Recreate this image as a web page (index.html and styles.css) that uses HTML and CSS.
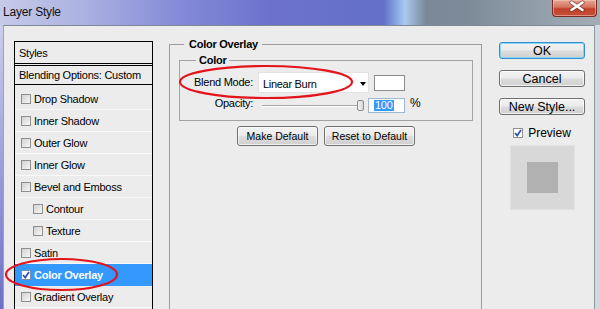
FILE: index.html
```html
<!DOCTYPE html>
<html lang="en">
<head>
    <meta charset="UTF-8">
    <meta name="viewport" content="width=device-width, initial-scale=1.0">
    <title>Layer Style</title>
    <link rel="stylesheet" href="styles.css">
</head>
<body>
<div class="window">
    <div class="titlebar">
        <span class="title">Layer Style</span>
        <span class="close">
            <svg width="45" height="17" viewBox="0 0 45 17">
                <path d="M18.5 3.5 L29.5 11 M29.5 3.5 L18.5 11" stroke="#5a2018" stroke-width="4.2" stroke-linecap="round" opacity="0.55"/>
                <path d="M18.5 3.5 L29.5 11 M29.5 3.5 L18.5 11" stroke="#fff" stroke-width="2.6" stroke-linecap="round"/>
            </svg>
        </span>
    </div>

    <div class="client">
        <ul class="style-list">
            <li class="list-head">Styles</li>
            <li class="list-blend">Blending Options: Custom</li>
            <li class="list-items">
                <div class="item"><span class="check"></span>Drop Shadow</div>
                <div class="item"><span class="check"></span>Inner Shadow</div>
                <div class="item"><span class="check"></span>Outer Glow</div>
                <div class="item"><span class="check"></span>Inner Glow</div>
                <div class="item"><span class="check"></span>Bevel and Emboss</div>
                <div class="item sub"><span class="check"></span>Contour</div>
                <div class="item sub"><span class="check"></span>Texture</div>
                <div class="item"><span class="check"></span>Satin</div>
                <div class="item selected"><span class="check on"></span>Color Overlay</div>
                <div class="item"><span class="check"></span>Gradient Overlay</div>
            </li>
        </ul>

        <fieldset class="group">
            <legend>Color Overlay</legend>
            <fieldset class="inner">
                <legend>Color</legend>
                <div class="field-row blend-row">
                    <label class="field-label">Blend Mode:</label>
                    <div class="select">
                        <span>Linear Burn</span>
                        <span class="arrow"></span>
                    </div>
                    <span class="swatch"></span>
                </div>
                <div class="field-row opacity-row">
                    <label class="field-label">Opacity:</label>
                    <div class="slider"><span class="track"></span><span class="thumb"></span></div>
                    <span class="num"><span class="num-sel">100</span></span>
                    <span class="pct">%</span>
                </div>
            </fieldset>
            <div class="group-buttons">
                <button class="btn small make">Make Default</button>
                <button class="btn small reset">Reset to Default</button>
            </div>
        </fieldset>

        <div class="side">
            <button class="btn side-btn default">OK</button>
            <button class="btn side-btn">Cancel</button>
            <button class="btn side-btn">New Style...</button>
            <label class="preview"><span class="check on"></span>Preview</label>
            <div class="thumb-box"><div class="thumb-square"></div></div>
        </div>
    </div>

    <!-- red annotation rings -->
    <svg class="marks" width="600" height="309" viewBox="0 0 600 309">
        <ellipse cx="266" cy="82" rx="86" ry="16" fill="none" stroke="#e3141b" stroke-width="2.2"/>
        <ellipse cx="61.5" cy="274.5" rx="55.5" ry="15.5" fill="none" stroke="#e3141b" stroke-width="2.2"/>
    </svg>
</div>
</body>
</html>
```

FILE: styles.css
```css
body { margin: 0; width: 600px; height: 309px; overflow: hidden; font-family: "Liberation Sans", Arial, sans-serif; font-size: 11px; color: #000; }
.window {
    position: relative; height: 309px; display: flex; flex-direction: column; overflow: hidden;
    background: linear-gradient(180deg, #d4d7ef 0%, #a9addf 40%, #6c70c8 100%);
}
.titlebar {
    height: 25px; flex: none; display: flex; justify-content: space-between; align-items: flex-start;
    background: linear-gradient(90deg, #c6cae9 0%, #abb1e1 14%, #848ad7 30%, #6c72cc 45%, #6470c9 64%, #8fb2e8 66.5%, #a9c9ee 67.5%, #7a8898 71%, #7d8b99 78%, #93a0ab 90%, #a3adb5 100%);
}
.title { font-size: 12px; letter-spacing: -0.2px; line-height: 25px; padding-left: 3px; color: #111; }
.close {
    width: 45px; height: 17px; margin-right: 3px; box-sizing: border-box;
    border: 1px solid #7a2c22; border-top: none; border-radius: 0 0 4px 4px;
    background: linear-gradient(180deg, #e7a596 0%, #d5735f 45%, #c2402a 55%, #c5503a 100%);
    box-shadow: inset 0 0 0 1px rgba(255, 210, 200, 0.5);
}
.close svg { display: block; margin-top: -1px; }

.client {
    flex: 1; min-height: 0; display: flex; align-items: flex-start; margin: 0 5px 0 3px; padding-left: 10px; overflow: hidden;
    background: #ececec; border-top: 1px solid #7d8996; border-left: 1px solid #9aa2b8; border-right: 1px solid #8e98a3;
    box-shadow: 5px 0 0 #d3d9e0;
}

/* styles list */
.style-list {
    width: 139px; align-self: stretch; flex: none; box-sizing: border-box; margin: 15px 0 0; padding: 0;
    list-style: none; border: 1px solid #000; border-bottom: none; letter-spacing: -0.25px; overflow: hidden;
}
.list-head { height: 21px; line-height: 22px; padding-left: 4px; border-bottom: 3px double #000; }
.list-blend { height: 18px; line-height: 19px; padding-left: 4px; border-bottom: 1px solid #000; }
.list-items { padding-top: 3px; }
.item { height: 21px; display: flex; align-items: center; padding-left: 6px; border-bottom: 1px solid #f9f9f9; white-space: nowrap; }
.item.sub { padding-left: 18px; }
.item.selected { background: #3399ff; color: #fff; font-weight: bold; border-bottom-color: #3399ff; }
.check {
    width: 10px; height: 10px; box-sizing: border-box; flex: none; margin-right: 3px;
    border: 1px solid #8f8f8f; background: linear-gradient(135deg, #d2d2d2, #f7f7f7);
}
.check.on {
    background: #fff url("data:image/svg+xml,%3Csvg xmlns='http://www.w3.org/2000/svg' width='8' height='8'%3E%3Cpath d='M1 4 L3.2 6.5 L7 1' fill='none' stroke='%232c4fa8' stroke-width='1.7'/%3E%3C/svg%3E") center no-repeat;
}
.item.selected .check { border-color: #7a8fb0; }

/* color overlay group */
.group {
    width: 313px; align-self: stretch; flex: none; box-sizing: border-box; margin: 11px 0 0 16px; padding: 0 8px 0 9px;
    border: 1px solid #9c9c9c; border-bottom: none; min-width: 0;
}
.group > legend { font-weight: bold; padding: 0 4px 0 5px; margin-left: 5px; line-height: 14px; letter-spacing: -0.25px; }
.inner { margin: 2px 0 0; padding: 0 0 7px; border: 1px solid #a3a3a3; min-width: 0; }
.inner > legend { font-weight: bold; padding: 0 3px; margin-left: 16px; line-height: 14px; letter-spacing: -0.25px; }
.field-row { display: flex; align-items: flex-start; letter-spacing: -0.25px; }
.blend-row { margin-top: 5px; height: 21px; }
.opacity-row { margin-top: 4px; height: 16px; }
.field-label { width: 73px; flex: none; text-align: right; }
.blend-row .field-label { line-height: 21px; }
.opacity-row .field-label { line-height: 13px; }
.select {
    width: 111px; height: 21px; box-sizing: border-box; margin-left: 5px; padding: 3px 2px 0 4px;
    display: flex; justify-content: space-between; align-items: center;
    background: #fff; border: 1px solid #e2e2e2; letter-spacing: -0.3px;
}
.arrow { width: 0; height: 0; border-left: 3.5px solid transparent; border-right: 3.5px solid transparent; border-top: 4px solid #000; margin-top: -1px; }
.swatch { width: 31px; height: 16px; box-sizing: border-box; margin: 3px 0 0 5px; background: #fff; border: 1px solid #8c8c8c; }
.slider { position: relative; width: 102px; height: 16px; margin-left: 9px; }
.track { position: absolute; left: 0; right: 4px; top: 8px; height: 1px; background: #a7a7a7; border-bottom: 1px solid #fff; }
.thumb {
    position: absolute; right: 0; top: 3px; width: 7px; height: 11px; box-sizing: border-box;
    border: 1px solid #8d8d8d; border-radius: 2px; background: linear-gradient(90deg, #f4f4f4, #d8d8d8);
}
.num {
    width: 37px; height: 15px; box-sizing: border-box; margin: 1px 0 0 4px; padding: 1px 0 0 5px;
    background: #fff; border: 1px solid #9fb5d2; line-height: 11px;
}
.num-sel { background: #3399ff; color: #fff; display: inline-block; padding: 0 1px; }
.pct { margin-left: 5px; line-height: 13px; font-size: 12px; }
.group-buttons { display: flex; justify-content: center; gap: 6px; margin-top: 5px; }

/* buttons */
.btn {
    font-family: "Liberation Sans", Arial, sans-serif; color: #000; padding: 0; box-sizing: border-box;
    border: 1px solid #707070; border-radius: 3px;
    background: linear-gradient(180deg, #f3f3f3 0%, #ebebeb 48%, #dddddd 52%, #cfcfcf 100%);
    box-shadow: inset 0 0 0 1px rgba(255, 255, 255, 0.7);
}
.btn.small { height: 20px; font-size: 10.5px; }
.btn.make { width: 81px; }
.btn.reset { width: 91px; }

.side { width: 86px; flex: none; margin: 16px 0 0 17px; display: flex; flex-direction: column; align-items: center; }
.side-btn { width: 86px; height: 17px; font-size: 12.5px; line-height: 14px; margin-bottom: 11px; }
.side-btn.default { border-color: #2f8fd0; box-shadow: inset 0 0 0 1px #8ad6f6; }
.preview { display: flex; align-items: center; height: 14px; margin-top: 0; font-size: 12px; }
.preview .check { margin-right: 5px; }
.thumb-box {
    width: 65px; height: 65px; box-sizing: border-box; margin-top: 5px; display: flex; align-items: center; justify-content: center;
    background: #d8d8d8; border: 1px solid #e2e2e2;
}
.thumb-square { width: 31px; height: 31px; background: #b1b1b1; }

.marks { position: absolute; left: 0; top: 0; pointer-events: none; }
```
